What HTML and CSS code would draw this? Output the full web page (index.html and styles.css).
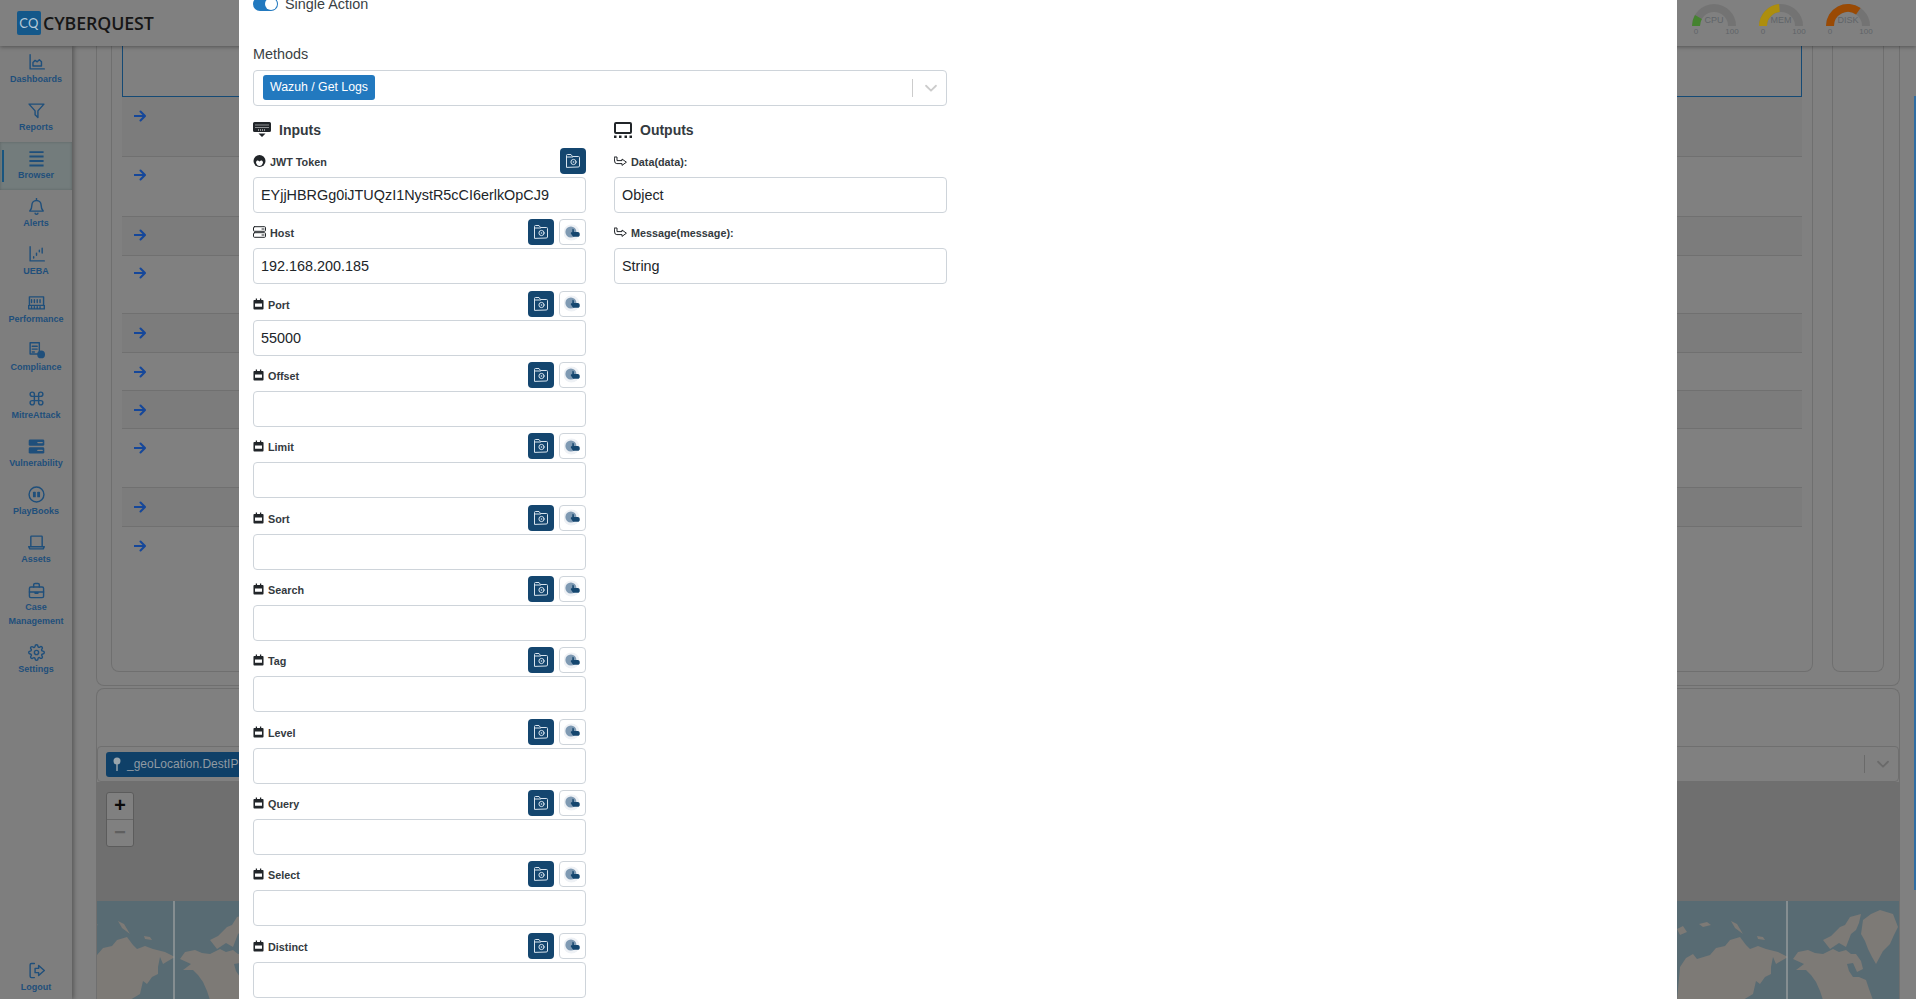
FILE: index.html
```html
<!DOCTYPE html>
<html lang="en">
<head>
<meta charset="utf-8">
<title>CyberQuest</title>
<link rel="stylesheet" href="styles.css">
</head>
<body>
<svg class="defs" aria-hidden="true">
  <symbol id="i-dash" viewBox="0 0 24 24"><path d="M3 1v20h20M7 17v-5l3-3 3 2 3-3 3 3v6z"/></symbol>
  <symbol id="i-funnel" viewBox="0 0 24 24"><path d="M1.500 3h21l-8.500 9.500V22l-4-4v-5.500z"/></symbol>
  <symbol id="i-list" viewBox="0 0 24 24"><path class="thick" d="M2 3h20M2 9.300h20M2 15.600h20M2 22h20"/></symbol>
  <symbol id="i-bell" viewBox="0 0 24 24"><path d="M12 3.500a6.500 6.500 0 0 0-6.500 6.500c0 5-1.500 7-3 8.500h19c-1.500-1.500-3-3.500-3-8.500A6.500 6.500 0 0 0 12 3.500zM10 21.500a2 1.500 0 0 0 4 0M12 .5v3"/></symbol>
  <symbol id="i-ueba" viewBox="0 0 24 24"><path d="M3 1v20h20M8 15v2M12 10v3M16 6v2M20 3v7"/></symbol>
  <symbol id="i-mem" viewBox="0 0 24 24"><path d="M2 4h20v12H2zM1 21v-5h22v5zM5 8v4M9 8v4M13 8v4M17 8v4M5 18v3M9 18v3M13 18v3M17 18v3"/></symbol>
  <symbol id="i-comp" viewBox="0 0 24 24"><path d="M15 17H3V1h13v11M6 6h7M6 10h7M6 14h3"/><circle class="solid" cx="18.500" cy="17.500" r="5.500"/></symbol>
  <symbol id="i-cmd" viewBox="0 0 24 24"><path d="M15 6v12a3 3 0 1 0 3-3H6a3 3 0 1 0 3 3V6a3 3 0 1 0-3 3h12a3 3 0 1 0-3-3z"/></symbol>
  <symbol id="i-vuln" viewBox="0 0 24 24"><rect class="solid" x="1" y="2" width="22" height="9" rx="2"/><rect class="solid" x="1" y="13" width="22" height="9" rx="2"/><path class="notch" d="M14 6.500h6M14 17.500h6"/></symbol>
  <symbol id="i-play" viewBox="0 0 24 24"><circle cx="12" cy="12" r="10.500"/><rect class="solid" x="7" y="8" width="4" height="8" rx="1"/><rect class="solid" x="13" y="8" width="4" height="8" rx="1"/></symbol>
  <symbol id="i-laptop" viewBox="0 0 24 24"><path d="M4 17V4a1 1 0 0 1 1-1h14a1 1 0 0 1 1 1v13M1 18h22l-1.500 3h-19z"/></symbol>
  <symbol id="i-case" viewBox="0 0 24 24"><rect x="2" y="7" width="20" height="15" rx="2"/><path d="M8 7V4a2 2 0 0 1 2-2h4a2 2 0 0 1 2 2v3M2 14h20M10 14v2h4v-2"/></symbol>
  <symbol id="i-gear" viewBox="0 0 24 24"><circle cx="12" cy="12" r="3"/><path d="M19.400 15a1.650 1.650 0 0 0 .33 1.820l.06.06a2 2 0 0 1 0 2.830 2 2 0 0 1-2.830 0l-.06-.06a1.650 1.650 0 0 0-1.820-.33 1.650 1.650 0 0 0-1 1.510V21a2 2 0 0 1-2 2 2 2 0 0 1-2-2v-.09A1.650 1.650 0 0 0 9 19.400a1.650 1.650 0 0 0-1.820.33l-.06.06a2 2 0 0 1-2.830 0 2 2 0 0 1 0-2.830l.06-.06a1.650 1.650 0 0 0 .33-1.820 1.650 1.650 0 0 0-1.510-1H3a2 2 0 0 1-2-2 2 2 0 0 1 2-2h.09A1.650 1.650 0 0 0 4.600 9a1.650 1.650 0 0 0-.33-1.820l-.06-.06a2 2 0 0 1 0-2.830 2 2 0 0 1 2.830 0l.06.06a1.650 1.650 0 0 0 1.820.33H9a1.650 1.650 0 0 0 1-1.510V3a2 2 0 0 1 2-2 2 2 0 0 1 2 2v.09a1.650 1.650 0 0 0 1 1.510 1.650 1.650 0 0 0 1.820-.33l.06-.06a2 2 0 0 1 2.830 0 2 2 0 0 1 0 2.830l-.06.06a1.650 1.650 0 0 0-.33 1.820V9a1.650 1.650 0 0 0 1.510 1H21a2 2 0 0 1 2 2 2 2 0 0 1-2 2h-.09a1.650 1.650 0 0 0-1.510 1z"/></symbol>
  <symbol id="i-logout" viewBox="0 0 24 24"><path d="M9 2H5a2 2 0 0 0-2 2v16a2 2 0 0 0 2 2h4M10 9h5V5l8 7-8 7v-4h-5z"/></symbol>
  <symbol id="i-arrow" viewBox="0 0 12 12"><path d="M.5 6h10M6.500 1.500L11 6l-4.500 4.500"/></symbol>
  <symbol id="i-folder" viewBox="0 0 16 16"><path class="thin" d="M1.500 14V2.500a1 1 0 0 1 1-1h3.500l1.500 2h6a1 1 0 0 1 1 1V13a1 1 0 0 1-1 1zM2 4h5.500"/><circle class="thin" cx="8.500" cy="9" r="2.600"/><circle class="dot" cx="8.500" cy="9" r=".8"/></symbol>
  <symbol id="i-hand" viewBox="0 0 16 16"><circle class="halo" cx="7" cy="8" r="7.500"/><circle class="mid" cx="6.500" cy="7.500" r="5.200"/><path class="hand" d="M8 4.500c1 0 1.300.7 1.300 1.500v1.500H13c1 0 1.800.8 1.800 1.800v1c0 1-.8 1.700-1.800 1.700H9.500C8.500 12 8 11.300 7.500 10.500L6.500 9c-.5-.8.500-1.500 1.200-1z"/></symbol>
  <symbol id="i-cal" viewBox="0 0 12 12"><path class="cal" d="M3 0h1.400v1.500h3.200V0H9v1.500h1.500a1 1 0 0 1 1 1V11a1 1 0 0 1-1 1h-9a1 1 0 0 1-1-1V2.500a1 1 0 0 1 1-1H3zM2.200 5.500v3.500h7.600V5.500z"/></symbol>
  <symbol id="i-server" viewBox="0 0 13 12"><path class="line" d="M1.500.7h10a1 1 0 0 1 1 1v2.600a1 1 0 0 1-1 1h-10a1 1 0 0 1-1-1V1.700a1 1 0 0 1 1-1zM1.500 6.700h10a1 1 0 0 1 1 1v2.600a1 1 0 0 1-1 1h-10a1 1 0 0 1-1-1V7.700a1 1 0 0 1 1-1zM9 3h2M9 9h2"/></symbol>
  <symbol id="i-user" viewBox="0 0 12 12"><circle class="cal" cx="6" cy="6" r="6"/><path class="cutout" d="M2.500 7.500C3 5 4.500 5 6 6.500 7.500 5 9 5 9.500 7.500 9 10 7.500 11 6 11S3 10 2.500 7.500z"/></symbol>
  <symbol id="i-out" viewBox="0 0 13 11"><path class="line" d="M.6 1h2.400v3.600h5V3l4.400 3.200-4.400 3.200V7.600H2.800A2.200 2.200 0 0 1 .6 5.400z"/></symbol>
  <symbol id="i-keyboard" viewBox="0 0 18 16"><path class="cal" d="M1.500 0h15A1.500 1.500 0 0 1 18 1.500v7a1.500 1.500 0 0 1-1.500 1.500h-15A1.500 1.500 0 0 1 0 8.500v-7A1.500 1.500 0 0 1 1.500 0zM5.500 11.500h7L9 15z"/><path class="keys" d="M2.500 3h13M2.500 5.500h13M5 8h8"/></symbol>
  <symbol id="i-screen" viewBox="0 0 18 16"><path class="line2" d="M2 1h14a1 1 0 0 1 1 1v8a1 1 0 0 1-1 1H2a1 1 0 0 1-1-1V2a1 1 0 0 1 1-1z"/><path class="cal" d="M0 13.500h2.500V16H0zM5 13.500h2.500V16H5zM10.500 13.500H13V16h-2.500zM15.500 13.500H18V16h-2.500z"/></symbol>
  <symbol id="i-chev" viewBox="0 0 20 20"><path d="M4.500 7.500L10 13l5.500-5.500"/></symbol>
  <g id="land">
    <path d="M-107 66L-101 57L-94 53L-90 58L-77 54L-71 47L-62 45L-57 39L-47 36L-41 44L-37 48L-29 45L-21 48L-9 51L1 56L-6 60L-11 63L-14 56L-16 66L-16 73L-22 76L-27 83L-31 80L-34 93L-44 99L-110 99z"/>
    <path d="M-56 20L-50 23L-44 33L-52 27z"/>
    <path d="M-110 28L-104 25L-100 31L-107 34zM-88 23L-80 21L-76 24L-84 26zM-30 35L-24 36L-22 39L-29 38z"/>
    <path d="M6 58L11 51L21 49L28 52L36 53L46 48L52 51L59 49L64 53L69 53L74 60L76 68L70 71L66 62L60 63L62 70L66 76L72 76L79 79L82 88L86 99L36 99L33 90L29 81L24 74L19 69L9 69L17 63z"/>
    <path d="M36 39L44 35L53 26L58 24L63 16L74 13L72 22L69 29L64 33L59 46L52 42L43 48z"/>
    <path d="M76 19L84 13L93 9L106 13L111 26L107 34L103 43L96 50L89 63L85 56L81 48L78 40L74 33z"/>
  </g>
</svg>

<div class="app">
  <header class="topbar">
    <div class="brand">
      <span class="logo">CQ</span>
      <span class="brand-name">CYBERQUEST</span>
    </div>
    <div class="gauges">
      <svg class="gauge" viewBox="-30 -26 60 38"><path class="g-track" d="M-22 0A22 22 0 0 1 22 0H14A14 14 0 0 0-14 0z"/><path class="g-green" d="M-22 0A22 22 0 0 1-19.050-11L-12.120-7A14 14 0 0 0-14 0z"/><text class="g-name" x="0" y="-3">CPU</text><text class="g-num" x="-18" y="8">0</text><text class="g-num" x="18" y="8">100</text></svg>
      <svg class="gauge" viewBox="-30 -26 60 38"><path class="g-track" d="M-22 0A22 22 0 0 1 22 0H14A14 14 0 0 0-14 0z"/><path class="g-yellow" d="M-22 0A22 22 0 0 1-1.920-21.920L-1.220-13.950A14 14 0 0 0-14 0z"/><text class="g-name" x="0" y="-3">MEM</text><text class="g-num" x="-18" y="8">0</text><text class="g-num" x="18" y="8">100</text></svg>
      <svg class="gauge" viewBox="-30 -26 60 38"><path class="g-track" d="M-22 0A22 22 0 0 1 22 0H14A14 14 0 0 0-14 0z"/><path class="g-orange" d="M-22 0A22 22 0 0 1 12.600-18L8.030-11.470A14 14 0 0 0-14 0z"/><text class="g-name" x="0" y="-3">DISK</text><text class="g-num" x="-18" y="8">0</text><text class="g-num" x="18" y="8">100</text></svg>
    </div>
  </header>

  <nav class="sidebar">
    <a class="nav-item"><svg class="nav-icon"><use href="#i-dash"/></svg><span>Dashboards</span></a>
    <a class="nav-item"><svg class="nav-icon"><use href="#i-funnel"/></svg><span>Reports</span></a>
    <a class="nav-item active"><svg class="nav-icon"><use href="#i-list"/></svg><span>Browser</span></a>
    <a class="nav-item"><svg class="nav-icon"><use href="#i-bell"/></svg><span>Alerts</span></a>
    <a class="nav-item"><svg class="nav-icon"><use href="#i-ueba"/></svg><span>UEBA</span></a>
    <a class="nav-item"><svg class="nav-icon"><use href="#i-mem"/></svg><span>Performance</span></a>
    <a class="nav-item"><svg class="nav-icon"><use href="#i-comp"/></svg><span>Compliance</span></a>
    <a class="nav-item"><svg class="nav-icon"><use href="#i-cmd"/></svg><span>MitreAttack</span></a>
    <a class="nav-item"><svg class="nav-icon"><use href="#i-vuln"/></svg><span>Vulnerability</span></a>
    <a class="nav-item"><svg class="nav-icon"><use href="#i-play"/></svg><span>PlayBooks</span></a>
    <a class="nav-item"><svg class="nav-icon"><use href="#i-laptop"/></svg><span>Assets</span></a>
    <a class="nav-item"><svg class="nav-icon"><use href="#i-case"/></svg><span>Case<br>Management</span></a>
    <a class="nav-item"><svg class="nav-icon"><use href="#i-gear"/></svg><span>Settings</span></a>
    <a class="nav-item logout"><svg class="nav-icon"><use href="#i-logout"/></svg><span>Logout</span></a>
  </nav>

  <main class="main">
    <section class="card top-card">
      <div class="inner-card table-card">
        <div class="outlined"></div>
        <div class="row r60 shade"><svg class="row-arrow"><use href="#i-arrow"/></svg></div>
        <div class="row r60 p12"><svg class="row-arrow"><use href="#i-arrow"/></svg></div>
        <div class="row r39 shade p12"><svg class="row-arrow"><use href="#i-arrow"/></svg></div>
        <div class="row r58 p11"><svg class="row-arrow"><use href="#i-arrow"/></svg></div>
        <div class="row r39 shade"><svg class="row-arrow"><use href="#i-arrow"/></svg></div>
        <div class="row r38"><svg class="row-arrow"><use href="#i-arrow"/></svg></div>
        <div class="row r38 shade"><svg class="row-arrow"><use href="#i-arrow"/></svg></div>
        <div class="row r59"><svg class="row-arrow"><use href="#i-arrow"/></svg></div>
        <div class="row r39 shade"><svg class="row-arrow"><use href="#i-arrow"/></svg></div>
        <div class="row r38 last"><svg class="row-arrow"><use href="#i-arrow"/></svg></div>
      </div>
      <div class="inner-card side-card"></div>
    </section>
    <section class="card map-card">
      <div class="map-select">
        <span class="geo-chip"><svg class="pin" viewBox="0 0 8 14"><circle cx="4" cy="4" r="3.500"/><path d="M3.300 7h1.400v7H3.300z"/></svg>_geoLocation.DestIP</span>
        <span class="select-sep"></span>
        <svg class="chev dim"><use href="#i-chev"/></svg>
      </div>
      <div class="map">
        <svg class="world" viewBox="0 0 1802 98" preserveAspectRatio="none">
          <rect class="sea" x="0" y="0" width="1802" height="98"/>
          <use href="#land" class="landmass" x="77" y="0"/>
          <use href="#land" class="landmass" x="1690" y="0"/>
          <path class="seam" d="M77 0v98M1690 0v98"/>
        </svg>
        <div class="zoom-ctl">
          <span class="zoom-in">+</span>
          <span class="zoom-out">−</span>
        </div>
      </div>
    </section>
  </main>
</div>
<div class="edge-bar"></div>

<div class="modal">
  <div class="modal-body">
    <label class="toggle-row"><span class="toggle"><span class="knob"></span></span>Single Action</label>
    <div class="methods-label">Methods</div>
    <div class="select">
      <span class="method-chip">Wazuh / Get Logs</span>
      <span class="select-sep"></span>
      <svg class="chev"><use href="#i-chev"/></svg>
    </div>
    <div class="columns">
      <div class="col">
        <h3 class="col-title"><svg class="title-icon"><use href="#i-keyboard"/></svg>Inputs</h3>
        <div class="field">
          <div class="field-head"><svg class="f-icon wide"><use href="#i-user"/></svg><span class="f-label">JWT Token</span><button class="btn-dark"><svg><use href="#i-folder"/></svg></button></div>
          <input class="f-input" value="EYjjHBRGg0iJTUQzI1NystR5cCI6erlkOpCJ9">
        </div>
        <div class="field">
          <div class="field-head"><svg class="f-icon wide"><use href="#i-server"/></svg><span class="f-label">Host</span><button class="btn-dark"><svg><use href="#i-folder"/></svg></button><button class="btn-light"><svg><use href="#i-hand"/></svg></button></div>
          <input class="f-input" value="192.168.200.185">
        </div>
        <div class="field">
          <div class="field-head"><svg class="f-icon"><use href="#i-cal"/></svg><span class="f-label">Port</span><button class="btn-dark"><svg><use href="#i-folder"/></svg></button><button class="btn-light"><svg><use href="#i-hand"/></svg></button></div>
          <input class="f-input" value="55000">
        </div>
        <div class="field">
          <div class="field-head"><svg class="f-icon"><use href="#i-cal"/></svg><span class="f-label">Offset</span><button class="btn-dark"><svg><use href="#i-folder"/></svg></button><button class="btn-light"><svg><use href="#i-hand"/></svg></button></div>
          <input class="f-input">
        </div>
        <div class="field">
          <div class="field-head"><svg class="f-icon"><use href="#i-cal"/></svg><span class="f-label">Limit</span><button class="btn-dark"><svg><use href="#i-folder"/></svg></button><button class="btn-light"><svg><use href="#i-hand"/></svg></button></div>
          <input class="f-input">
        </div>
        <div class="field">
          <div class="field-head"><svg class="f-icon"><use href="#i-cal"/></svg><span class="f-label">Sort</span><button class="btn-dark"><svg><use href="#i-folder"/></svg></button><button class="btn-light"><svg><use href="#i-hand"/></svg></button></div>
          <input class="f-input">
        </div>
        <div class="field">
          <div class="field-head"><svg class="f-icon"><use href="#i-cal"/></svg><span class="f-label">Search</span><button class="btn-dark"><svg><use href="#i-folder"/></svg></button><button class="btn-light"><svg><use href="#i-hand"/></svg></button></div>
          <input class="f-input">
        </div>
        <div class="field">
          <div class="field-head"><svg class="f-icon"><use href="#i-cal"/></svg><span class="f-label">Tag</span><button class="btn-dark"><svg><use href="#i-folder"/></svg></button><button class="btn-light"><svg><use href="#i-hand"/></svg></button></div>
          <input class="f-input">
        </div>
        <div class="field">
          <div class="field-head"><svg class="f-icon"><use href="#i-cal"/></svg><span class="f-label">Level</span><button class="btn-dark"><svg><use href="#i-folder"/></svg></button><button class="btn-light"><svg><use href="#i-hand"/></svg></button></div>
          <input class="f-input">
        </div>
        <div class="field">
          <div class="field-head"><svg class="f-icon"><use href="#i-cal"/></svg><span class="f-label">Query</span><button class="btn-dark"><svg><use href="#i-folder"/></svg></button><button class="btn-light"><svg><use href="#i-hand"/></svg></button></div>
          <input class="f-input">
        </div>
        <div class="field">
          <div class="field-head"><svg class="f-icon"><use href="#i-cal"/></svg><span class="f-label">Select</span><button class="btn-dark"><svg><use href="#i-folder"/></svg></button><button class="btn-light"><svg><use href="#i-hand"/></svg></button></div>
          <input class="f-input">
        </div>
        <div class="field">
          <div class="field-head"><svg class="f-icon"><use href="#i-cal"/></svg><span class="f-label">Distinct</span><button class="btn-dark"><svg><use href="#i-folder"/></svg></button><button class="btn-light"><svg><use href="#i-hand"/></svg></button></div>
          <input class="f-input">
        </div>
      </div>
      <div class="col">
        <h3 class="col-title"><svg class="title-icon"><use href="#i-screen"/></svg>Outputs</h3>
        <div class="field">
          <div class="field-head"><svg class="f-icon out"><use href="#i-out"/></svg><span class="f-label">Data(data):</span></div>
          <input class="f-input" value="Object">
        </div>
        <div class="field">
          <div class="field-head"><svg class="f-icon out"><use href="#i-out"/></svg><span class="f-label">Message(message):</span></div>
          <input class="f-input" value="String">
        </div>
      </div>
    </div>
  </div>
</div>
</body>
</html>
```

FILE: styles.css
```css
* { box-sizing: border-box; }
html, body { margin: 0; height: 999px; overflow: hidden; }
body { background: #808080; font-family: "Liberation Sans", Arial, sans-serif; color: #212529; }
.defs { position: absolute; width: 0; height: 0; }
symbol path, symbol circle, symbol rect { fill: none; stroke: currentColor; stroke-width: 2; stroke-linejoin: round; stroke-linecap: round; }
symbol .solid { fill: currentColor; stroke: none; }
symbol .thick { stroke-width: 2.800; stroke-linecap: butt; }
symbol .notch { stroke: #808080; stroke-width: 2; }
symbol .cal { fill: #212529; stroke: none; fill-rule: evenodd; }
symbol .cutout { fill: #fff; stroke: none; }
symbol .line { stroke: #212529; stroke-width: 1; }
symbol .line2 { stroke: #212529; stroke-width: 2; }
symbol .keys { stroke: #fff; stroke-width: 1.100; stroke-dasharray: 1 1; stroke-linecap: butt; }
symbol .thin { stroke-width: 1; }
symbol .dot { fill: currentColor; stroke: none; }
symbol .halo { fill: #eef1f5; stroke: none; }
symbol .mid { fill: #7f9ab3; stroke: none; }
symbol .hand { fill: #14466f; stroke: none; }

.app { display: grid; grid-template-columns: 72px 1fr; grid-template-rows: 46px 953px; height: 999px; }
.topbar { grid-column: 1 / 3; position: relative; z-index: 3; display: flex; align-items: flex-start; justify-content: space-between; background: #808080; box-shadow: 0 1px 4px rgba(0,0,0,.35); padding: 11px 0 0 17px; }
.brand { display: flex; align-items: center; gap: 2px; }
.logo { width: 24px; height: 24px; border-radius: 2px; background: #14588a; color: #b4c9d8; font: 400 13px/24px "Lato", sans-serif; text-align: center; letter-spacing: .3px; }
.brand-name { font: 600 17.800px/24px "Open Sans", sans-serif; color: #161616; letter-spacing: -.1px; }
.gauges { display: flex; gap: 7px; margin: -11px 38px 0 0; }
.gauge { width: 60px; height: 38px; display: block; }
.g-track { fill: #737373; }
.g-green { fill: #45832f; }
.g-yellow { fill: #ad8e0e; }
.g-orange { fill: #9a4a04; }
.gauge text { text-anchor: middle; fill: #5f6468; font-family: "Liberation Sans", sans-serif; }
.g-name { font-size: 9px; }
.g-num { font-size: 8px; }

.sidebar { display: flex; flex-direction: column; background: #7e7e7e; box-shadow: 2px 0 4px rgba(0,0,0,.3); position: relative; z-index: 2; }
.nav-item { display: flex; flex-direction: column; align-items: center; height: 48px; padding-top: 8px; color: #1f4f7b; font-size: 9px; font-weight: 700; line-height: 14px; text-align: center; flex: none; }
.nav-item:nth-child(12) { height: 62px; }
.nav-item span { margin-top: 1px; }
.nav-icon { width: 17px; height: 17px; display: block; flex: none; }
.nav-item.active { background: #737c7c; position: relative; box-shadow: inset 0 0 3px rgba(0,0,0,.2); }
.nav-item.active::before { content: ""; position: absolute; left: 2px; top: 8px; width: 2px; height: 32px; background: #19557f; }
.nav-item.logout { margin-top: auto; height: 45px; }

.main { background: #808080; padding-left: 24px; padding-right: 16px; display: flex; flex-direction: column; gap: 2px; overflow: hidden; position: relative; }
.card { border: 1px solid #6f6f6f; border-top: 0; border-radius: 0 0 8px 8px; }
.top-card { height: 640px; display: flex; padding: 0 14px; gap: 19px; flex: none; }
.inner-card { border: 1px solid #6f6f6f; border-top: 0; border-radius: 0 0 8px 8px; height: 626px; }
.table-card { width: 1702px; padding: 0 10px; }
.side-card { width: 52px; }
.outlined { height: 51px; border: 1px solid #154a75; border-top: 0; }
.row { border-bottom: 1px solid #707070; padding: 13px 0 0 12px; }
.row.p12 { padding-top: 12px; }
.row.p11 { padding-top: 11px; }
.row.last { border-bottom: 0; }
.row.shade { background: #7c7c7c; }
.r60 { height: 60px; } .r59 { height: 59px; } .r58 { height: 58px; } .r39 { height: 39px; } .r38 { height: 38px; }
.row-arrow { width: 12px; height: 12px; display: block; color: #15479a; }

.map-card { flex: 1; border-top: 1px solid #6f6f6f; border-radius: 8px 8px 0 0; border-bottom: 0; padding-top: 57px; display: flex; flex-direction: column; }
.map-select { height: 36px; flex: none; border: 1px solid #6f6f6f; border-radius: 4px; display: flex; align-items: center; padding: 0 6px 0 8px; background: #808080; }
.geo-chip { display: flex; align-items: center; gap: 6px; width: 400px; height: 25px; padding-left: 7px; background: #0f4068; color: #8f9aa3; border-radius: 3px; font-size: 12px; }
.pin { width: 8px; height: 14px; }
.pin circle { fill: #9aa5ac; } .pin path { fill: #9aa5ac; }
.select-sep { margin-left: auto; width: 1px; height: 18px; background: #ccc; }
.map-select .select-sep { background: #6a6a6a; }
.chev { width: 18px; height: 18px; margin-left: 9px; color: #ccc; }
.chev.dim { color: #6a6a6a; }
.map { flex: 1; position: relative; background: #6f6f6f; padding-top: 119px; overflow: hidden; }
.world { display: block; width: 1802px; height: 98px; }
.sea { fill: #586b73; }
.landmass { fill: #7d7a76; }
.seam { stroke: #a3a6a6; stroke-width: 1.200; fill: none; }
.zoom-ctl { position: absolute; left: 9px; top: 10px; width: 28px; height: 55px; background: #808080; border: 1px solid #5c5c5c; border-radius: 3px; display: flex; flex-direction: column; }
.zoom-ctl span { height: 26.500px; text-align: center; font: 700 20px/28px "Liberation Mono", monospace; }
.zoom-in { color: #0a0a0a; border-bottom: 1px solid #676767; }
.zoom-out { color: #5f5f5f; }
.edge-bar { position: fixed; right: 0; top: 96px; width: 2px; height: 794px; background: #2f6da3; }

.modal { position: fixed; left: 239px; top: 0; width: 1438px; height: 999px; background: #fff; overflow: hidden; z-index: 10; }
.modal-body { width: 722px; margin-top: -4px; padding: 0 14px; }
.toggle-row { display: flex; align-items: center; gap: 7px; height: 16px; font-size: 14.400px; color: #3a3f44; }
.toggle { width: 25px; height: 14px; border-radius: 7px; background: #2279bf; position: relative; display: block; }
.knob { position: absolute; right: 1px; top: 1px; width: 12px; height: 12px; border-radius: 50%; background: #fff; }
.methods-label { margin-top: 33px; height: 18px; line-height: 18px; font-size: 14.400px; color: #3a3f44; }
.select { margin-top: 7px; height: 36px; border: 1px solid #ced4da; border-radius: 4px; display: flex; align-items: center; padding: 0 6px 0 9px; }
.method-chip { height: 25px; line-height: 25px; padding: 0 7px; border-radius: 3px; background: #2279bf; color: #fff; font-size: 12.300px; margin-top: -1px; }
.columns { display: grid; grid-template-columns: 333px 333px; column-gap: 28px; }
.col-title { display: flex; align-items: center; gap: 8px; height: 18px; margin: 15px 0 9px; font-size: 14px; font-weight: 700; color: #343a40; }
.title-icon { width: 18px; height: 16px; flex: none; }
.field { height: 71.330px; }
.field-head { height: 26px; margin-bottom: 3px; display: flex; align-items: center; gap: 5px; }
.f-icon { width: 11px; height: 12px; margin-right: -1px; flex: none; }
.f-icon.wide { width: 13px; }
.f-icon.out { width: 13px; height: 11px; }
.f-label { font-size: 10.800px; font-weight: 700; color: #343a40; margin: 2px auto 0 0; }
.f-input { display: block; width: 333px; height: 36px; border: 1px solid #ced4da; border-radius: 4px; padding: 0 7px; font: 14.400px "Liberation Sans", sans-serif; color: #212529; background: #fff; outline: 0; }
.btn-dark, .btn-light { width: 26px; height: 26px; padding: 0; border-radius: 4px; display: flex; align-items: center; justify-content: center; }
.btn-dark { background: #14466f; border: 0; color: #d8e4ee; }
.btn-light { width: 27px; background: #fff; border: 1px solid #ced4da; }
.btn-dark svg { width: 16px; height: 16px; }
.btn-light svg { width: 17px; height: 17px; }
```
